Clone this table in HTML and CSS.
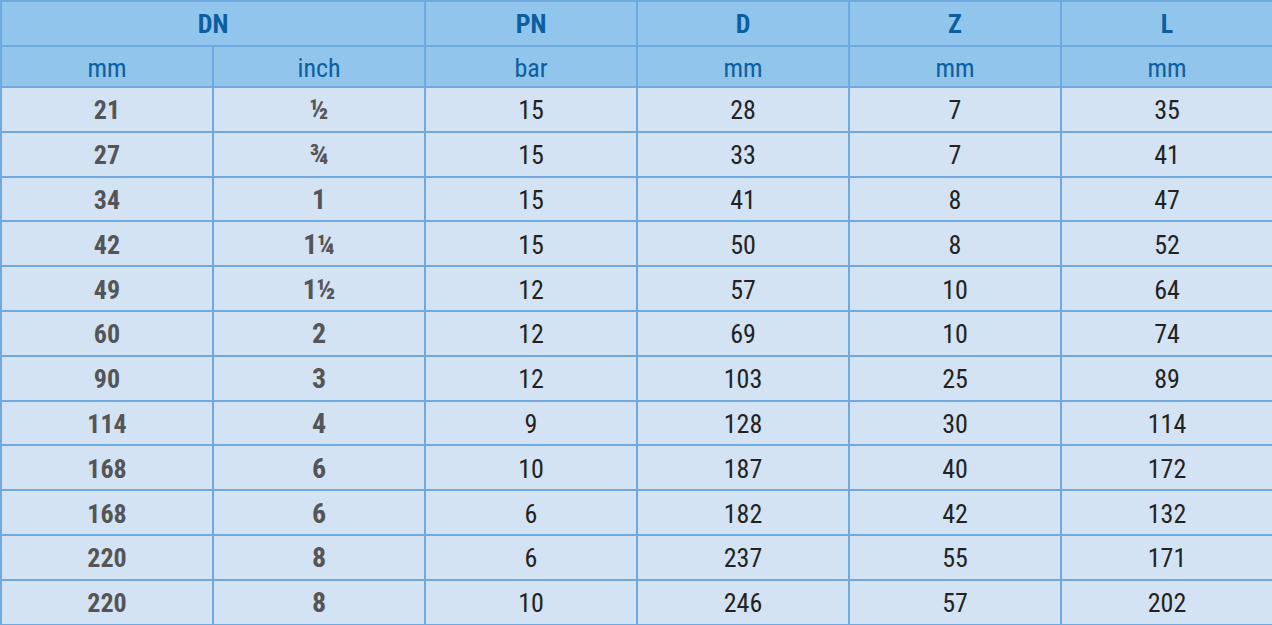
FILE: index.html
```html
<!DOCTYPE html>
<html>
<head>
<meta charset="utf-8">
<link rel="stylesheet" href="styles.css">
</head>
<body>
<table class="spec">
  <colgroup>
    <col class="c"><col class="c"><col class="c"><col class="c"><col class="c"><col class="c">
  </colgroup>
  <thead>
    <tr class="h1">
      <th colspan="2">DN</th><th>PN</th><th>D</th><th>Z</th><th>L</th>
    </tr>
    <tr class="h2">
      <th>mm</th><th>inch</th><th>bar</th><th>mm</th><th>mm</th><th>mm</th>
    </tr>
  </thead>
  <tbody>
    <tr><td class="b">21</td><td class="b">½</td><td>15</td><td>28</td><td>7</td><td>35</td></tr>
    <tr><td class="b">27</td><td class="b">¾</td><td>15</td><td>33</td><td>7</td><td>41</td></tr>
    <tr><td class="b">34</td><td class="b">1</td><td>15</td><td>41</td><td>8</td><td>47</td></tr>
    <tr><td class="b">42</td><td class="b">1¼</td><td>15</td><td>50</td><td>8</td><td>52</td></tr>
    <tr><td class="b">49</td><td class="b">1½</td><td>12</td><td>57</td><td>10</td><td>64</td></tr>
    <tr><td class="b">60</td><td class="b">2</td><td>12</td><td>69</td><td>10</td><td>74</td></tr>
    <tr><td class="b">90</td><td class="b">3</td><td>12</td><td>103</td><td>25</td><td>89</td></tr>
    <tr><td class="b">114</td><td class="b">4</td><td>9</td><td>128</td><td>30</td><td>114</td></tr>
    <tr><td class="b">168</td><td class="b">6</td><td>10</td><td>187</td><td>40</td><td>172</td></tr>
    <tr><td class="b">168</td><td class="b">6</td><td>6</td><td>182</td><td>42</td><td>132</td></tr>
    <tr><td class="b">220</td><td class="b">8</td><td>6</td><td>237</td><td>55</td><td>171</td></tr>
    <tr><td class="b">220</td><td class="b">8</td><td>10</td><td>246</td><td>57</td><td>202</td></tr>
  </tbody>
</table>
</body>
</html>
```
FILE: styles.css
```css
html, body {
  margin: 0;
  padding: 0;
  background: #ffffff;
}
.spec {
  width: 1272px;
  border-collapse: collapse;
  table-layout: fixed;
  font-family: "Roboto Condensed", "DejaVu Sans Condensed", "Liberation Sans", sans-serif;
  font-stretch: condensed;
  font-size: 26px;
  line-height: 26px;
  text-align: center;
}
.spec .c {
  width: 212px;
}
.spec th, .spec td {
  border: 2px solid #6eaadf;
  padding: 0;
  vertical-align: middle;
}
.spec th {
  background: #92c5eb;
  color: #0b5f9f;
}
.h1 th {
  height: 43px;
  font-weight: bold;
}
.h2 th {
  height: 39px;
  font-weight: normal;
  padding-top: 2px;
  height: 37px;
}
.spec td {
  background: #d3e3f4;
  color: #222222;
  height: 40.8px;
  padding-top: 2px;
}
.spec td.b {
  color: #555557;
  font-weight: bold;
}
.spec td.b:nth-child(2) {
  font-size: 28px;
}
```
